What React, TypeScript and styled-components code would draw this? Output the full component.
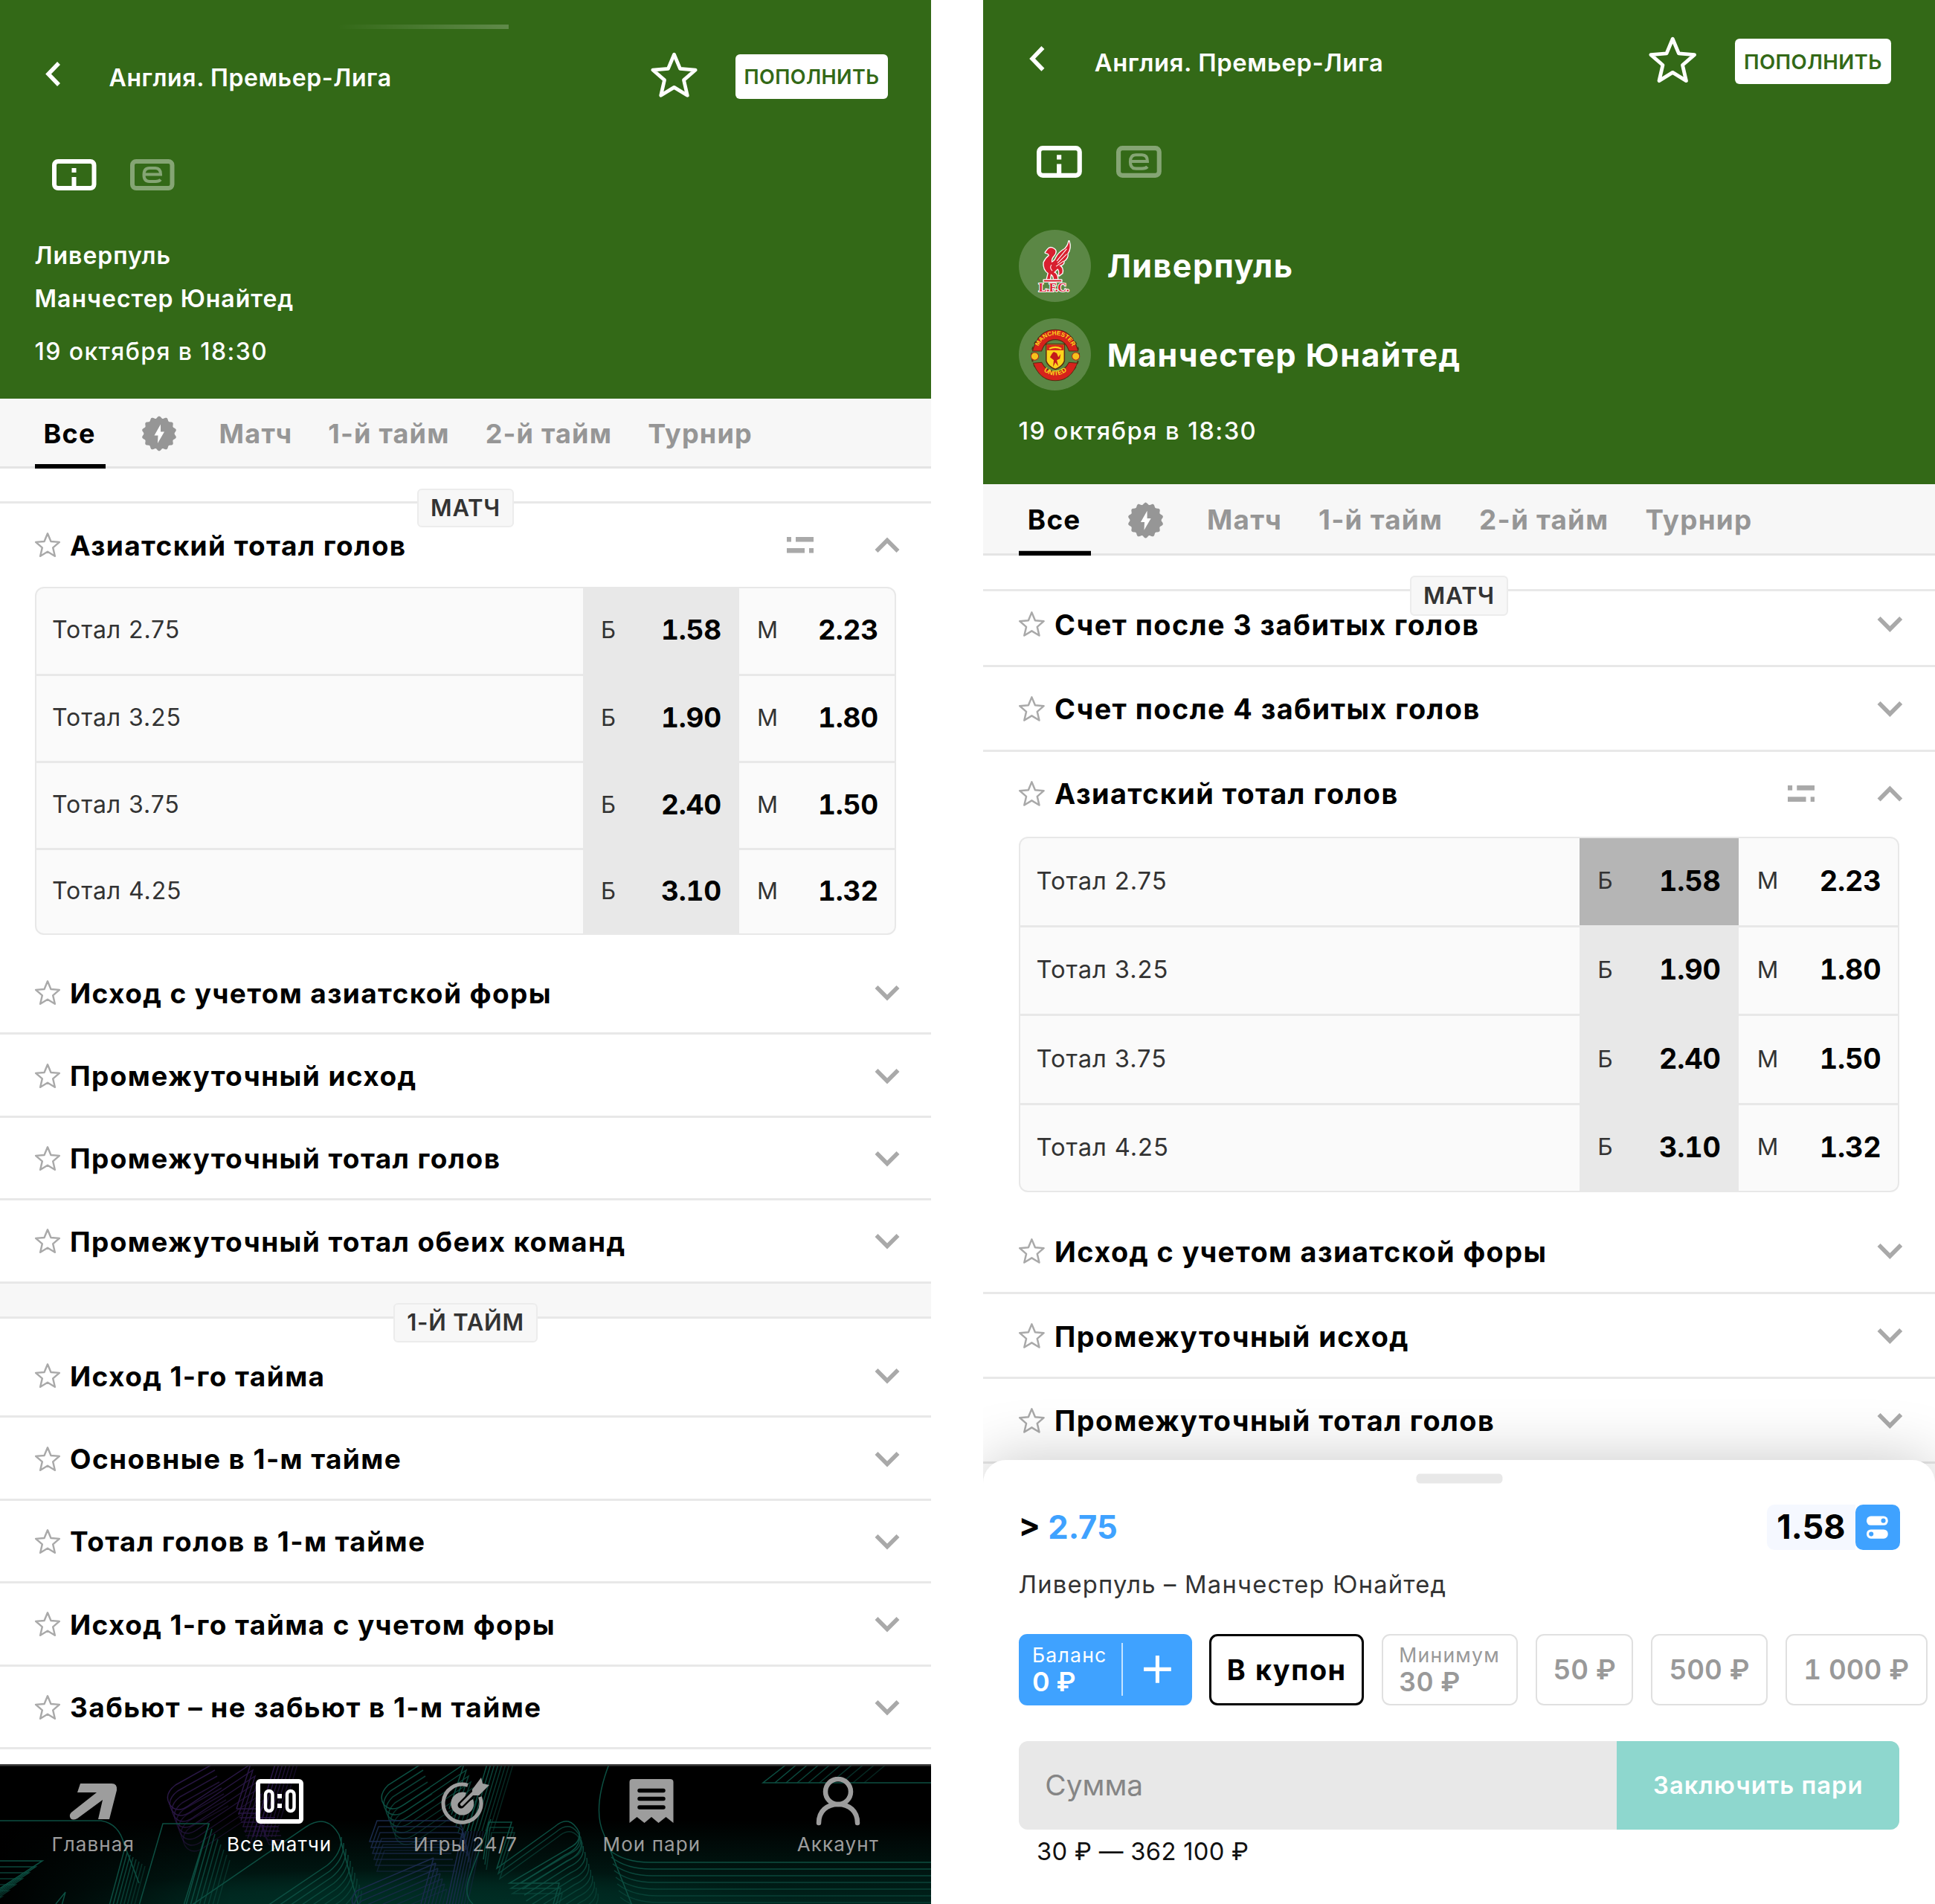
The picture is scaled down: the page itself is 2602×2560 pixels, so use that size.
import styled, { createGlobalStyle } from "styled-components";

type Market = {
  title: string;
  open?: boolean;
};

const totals = [
  { label: "Тотал 2.75", over: "1.58", under: "2.23" },
  { label: "Тотал 3.25", over: "1.90", under: "1.80" },
  { label: "Тотал 3.75", over: "2.40", under: "1.50" },
  { label: "Тотал 4.25", over: "3.10", under: "1.32" },
];

const matchMarkets: Market[] = [
  { title: "Азиатский тотал голов", open: true },
  { title: "Исход с учетом азиатской форы" },
  { title: "Промежуточный исход" },
  { title: "Промежуточный тотал голов" },
  { title: "Промежуточный тотал обеих команд" },
];

const firstHalfMarkets: Market[] = [
  { title: "Исход 1-го тайма" },
  { title: "Основные в 1-м тайме" },
  { title: "Тотал голов в 1-м тайме" },
  { title: "Исход 1-го тайма с учетом форы" },
  { title: "Забьют – не забьют в 1-м тайме" },
];

const scrolledMarkets: Market[] = [
  { title: "Счет после 3 забитых голов" },
  { title: "Счет после 4 забитых голов" },
  { title: "Азиатский тотал голов", open: true },
  { title: "Исход с учетом азиатской форы" },
  { title: "Промежуточный исход" },
  { title: "Промежуточный тотал голов" },
];

const STAR =
  "M17 2.2 L21.2 12.2 L32 13.1 L23.8 20.2 L26.3 31 L17 25.3 L7.7 31 L10.2 20.2 L2 13.1 L12.8 12.2 Z";

function StarIcon({ size, width }: { size: number; width: number }) {
  return (
    <svg width={size} height={size} viewBox="0 0 34 34" fill="none">
      <path
        d={STAR}
        stroke="currentColor"
        strokeWidth={width}
        strokeLinejoin="round"
      />
    </svg>
  );
}

function ArrowIcon({ up }: { up?: boolean }) {
  return (
    <svg width="34" height="22" viewBox="0 0 34 22" fill="none">
      <path
        d={up ? "M2.5 19 L17 4.5 L31.5 19" : "M2.5 3 L17 17.5 L31.5 3"}
        stroke="#a9a9a9"
        strokeWidth="5.6"
      />
    </svg>
  );
}

function FilterIcon() {
  return (
    <svg width="36" height="22" viewBox="0 0 36 22" fill="#a9a9a9">
      <rect x="0" y="0" width="6" height="6.5" />
      <rect x="12" y="0" width="24" height="6.5" />
      <rect x="0" y="15" width="24" height="6.5" />
      <rect x="30" y="15" width="6" height="6.5" />
    </svg>
  );
}

function BoltBadge() {
  const points = Array.from({ length: 144 }, (_, i) => {
    const a = (i / 144) * Math.PI * 2;
    const r = 22 + 1.4 * Math.cos(14 * a);
    return `${(24 + r * Math.sin(a)).toFixed(2)},${(24 - r * Math.cos(a)).toFixed(2)}`;
  }).join(" ");

  return (
    <svg width="48" height="48" viewBox="0 0 48 48">
      <polygon points={points} fill="#969696" />
      <path d="M26 11.500 L17.500 26.500 H22.500 L22 37 L31 21.500 H26 Z" fill="#fff" />
    </svg>
  );
}

function InfoIcon() {
  return (
    <svg width="60" height="42" viewBox="0 0 60 42" fill="none">
      <rect x="3" y="3" width="53.5" height="36" rx="5" stroke="#fff" strokeWidth="6" />
      <path d="M26.5 12 h6 v6 h-6 z M26.5 24 h6 v13 h-6 z" fill="#fff" />
    </svg>
  );
}

function EventIcon() {
  return (
    <svg width="60" height="42" viewBox="0 0 60 42" fill="none" opacity="0.4">
      <rect x="3" y="3" width="53.5" height="36" rx="5" stroke="#fff" strokeWidth="6" />
      <path
        d="M41 27.5 Q39 30 34 30 H26 Q18.500 30 18.500 21 Q18.500 12 26 12 H34 Q41 12 41 20.500 H18.500"
        stroke="#fff"
        strokeWidth="4"
      />
    </svg>
  );
}

function LiverpoolCrest() {
  return (
    <svg width="96" height="96" viewBox="0 0 96 96">
      <g stroke="#fff" strokeWidth="2.600" strokeLinejoin="round" paintOrder="stroke" fill="#d8202f">
        <path d="M35 30 L38 26 Q41 22 46 25 Q51 28 46 34 Q42 38 43 43 Q47 42 49 37 Q52 30 61 25 Q65 21 66 15 Q69 24 64 31 Q65 37 59 41 Q60 46 53 47 Q59 50 57 57 L53 60 Q54 53 51 51 L46 56 Q51 58 51 65 H46 Q46 60 42 58 L41 65 H37 L39 57 Q32 52 33 43 Q35 38 40 34 Q40 31 35 30 Z" />
        <path d="M33 66 H56 V68 H33 Z" />
      </g>
      <path
        d="M50 41 L63 25 M51 44 L63 32 M49 48 L59 41 M43 46 Q40 50 44 54"
        stroke="#fff"
        strokeWidth="1"
        fill="none"
      />
      <CrestLetters x="46" y="81">
        L.F.C.
      </CrestLetters>
    </svg>
  );
}

function ManchesterCrest() {
  return (
    <svg width="96" height="96" viewBox="0 0 96 96">
      <defs>
        <path id="mu-top" d="M23.500 48 A24.500 26 0 0 1 72.500 48" />
        <path id="mu-bottom" d="M24 61 Q47.500 89 72 61" />
      </defs>
      <circle cx="48" cy="48" r="31" fill="none" stroke="#4a3a14" strokeWidth="2" strokeDasharray="4 4" />
      <circle cx="21" cy="50" r="5" fill="#f6c31c" stroke="#b3261a" strokeWidth="1" />
      <circle cx="75" cy="50" r="5" fill="#f6c31c" stroke="#b3261a" strokeWidth="1" />
      <path d="M18 43 Q26 15 48 15 Q70 15 78 43 L66 43 Q61 28 48 28 Q35 28 30 43 Z" fill="#d6221c" stroke="#5b2a10" strokeWidth="1" />
      <path d="M19 59 L30 58 Q36 70 48 70 Q60 70 66 58 L77 59 Q68 82 48 82 Q28 82 19 59 Z" fill="#d6221c" stroke="#5b2a10" strokeWidth="1" />
      <path d="M36 34 H60 V56 Q58 63 48 67 Q38 63 36 56 Z" fill="#fbd41c" stroke="#5b2a10" strokeWidth="1.500" />
      <path d="M37 35 H59 V42 H37 Z" fill="#d6221c" />
      <path d="M40 40 Q48 36 56 40" stroke="#fbd41c" strokeWidth="2" fill="none" />
      <path
        d="M44 46 L46 44 L50 46 L52 51 L55 47 L54 53 L50 55 L52 63 L48 58 L45 64 L46 55 L41 51 Z"
        fill="#c41a1a"
      />
      <RingText>
        <textPath href="#mu-top" startOffset="50%" textAnchor="middle">
          MANCHESTER
        </textPath>
      </RingText>
      <RingText $size={9}>
        <textPath href="#mu-bottom" startOffset="50%" textAnchor="middle">
          UNITED
        </textPath>
      </RingText>
    </svg>
  );
}

function TopBar() {
  return (
    <TopRow>
      <BackIcon width="22" height="36" viewBox="0 0 22 36" fill="none">
        <path d="M19 3 L5 17.500 L19 32" stroke="#fff" strokeWidth="5.500" />
      </BackIcon>
      <League>Англия. Премьер-Лига</League>
      <FavoriteButton type="button">
        <StarIcon size={65} width={2.5} />
      </FavoriteButton>
      <DepositButton type="button">ПОПОЛНИТЬ</DepositButton>
    </TopRow>
  );
}

function ViewIcons() {
  return (
    <ViewRow>
      <InfoIcon />
      <EventIcon />
    </ViewRow>
  );
}

function TabBar() {
  return (
    <Tabs>
      <Tab $active>Все</Tab>
      <IconTab>
        <BoltBadge />
      </IconTab>
      <Tab>Матч</Tab>
      <Tab>1-й тайм</Tab>
      <Tab>2-й тайм</Tab>
      <Tab>Турнир</Tab>
    </Tabs>
  );
}

function TotalsTable({ selected }: { selected?: number }) {
  return (
    <Table>
      {totals.map((row, i) => (
        <TableRow key={row.label}>
          <RowLabel>{row.label}</RowLabel>
          <OddCell $tone={selected === i ? "#b5b5b5" : "#e8e8e8"}>
            <Side>Б</Side>
            <Odd>{row.over}</Odd>
          </OddCell>
          <OddCell>
            <Side>М</Side>
            <Odd>{row.under}</Odd>
          </OddCell>
        </TableRow>
      ))}
    </Table>
  );
}

function MarketList({ items, selected }: { items: Market[]; selected?: number }) {
  return (
    <>
      {items.map((item) => (
        <div key={item.title}>
          <MarketRow $open={item.open}>
            <RowStar>
              <StarIcon size={36} width={2.300} />
            </RowStar>
            <MarketTitle>{item.title}</MarketTitle>
            {item.open && <FilterIcon />}
            <ArrowBox $open={item.open}>
              <ArrowIcon up={item.open} />
            </ArrowBox>
          </MarketRow>
          {item.open && <TotalsTable selected={selected} />}
        </div>
      ))}
    </>
  );
}

// Repeats one outline with a fixed step, fading each copy out
function Echo(props: {
  d: string;
  count: number;
  dx: number;
  dy: number;
  color: string;
}) {
  return (
    <g stroke={props.color} fill="none" strokeWidth="1.500">
      {Array.from({ length: props.count }, (_, i) => (
        <path
          key={i}
          d={props.d}
          transform={`translate(${i * props.dx} ${i * props.dy})`}
          opacity={1 - (i / props.count) * 0.6}
        />
      ))}
    </g>
  );
}

function NavPattern() {
  const teal = "#0c4f42";
  const purple = "#2a1746";
  const blue = "#1b2b4d";
  return (
    <Pattern viewBox="0 0 1252 188" preserveAspectRatio="none">
      <defs>
        <radialGradient id="glow" cx="0.460" cy="1.050" r="0.420">
          <stop offset="0" stopColor="#003a2e" />
          <stop offset="0.600" stopColor="#001f19" />
          <stop offset="1" stopColor="#000" />
        </radialGradient>
        <linearGradient id="rise" x1="0" y1="0" x2="0" y2="1">
          <stop offset="0.400" stopColor="#002c23" stopOpacity="0" />
          <stop offset="1" stopColor="#002c23" stopOpacity="0.800" />
        </linearGradient>
        <linearGradient id="edge" x1="0" y1="0" x2="1" y2="0">
          <stop offset="0" stopColor="#000" />
          <stop offset="0.250" stopColor="#000" stopOpacity="0" />
        </linearGradient>
      </defs>
      <rect width="1252" height="188" fill="#000" />
      <rect y="60" width="1252" height="128" fill="url(#glow)" />
      <rect width="1252" height="188" fill="url(#rise)" />
      <rect width="1252" height="188" fill="url(#edge)" />
      <Echo color={purple} count={8} dx={3} dy={8} d="M286 0 L236 28 Q220 40 228 54 Q238 68 256 54 L337 0 L318 60" />
      <Echo color={purple} count={7} dx={5} dy={0} d="M370 0 L340 98" />
      <Echo color={purple} count={7} dx={2} dy={6} d="M318 60 H344 L350 72 H370" />
      <Echo color={teal} count={1} dx={0} dy={0} d="M0 76 H136 Q160 80 167 108 L187 160" />
      <Echo color={teal} count={8} dx={4} dy={3} d="M167 116 L147 190" />
      <Echo color={teal} count={7} dx={-9} dy={8} d="M-20 130 H57 L0 167" />
      <Echo color={teal} count={1} dx={0} dy={0} d="M75 188 L88 172 L83 190" />
      <Echo color={teal} count={1} dx={0} dy={0} d="M187 190 L219 80 H281 L247 190" />
      <Echo color={teal} count={8} dx={4} dy={7} d="M281 80 L250 190" />
      <Echo color={teal} count={1} dx={0} dy={0} d="M257 190 L412 84 Q440 66 456 95 L482 190" />
      <Echo color={teal} count={10} dx={3} dy={8} d="M360 190 L440 136 Q460 120 459 98" />
      <Echo color={teal} count={7} dx={3} dy={8} d="M566 0 L522 28 Q508 42 516 54 Q526 66 544 54 L624 0 L604 60" />
      <Echo color={teal} count={8} dx={5} dy={0} d="M655 0 L628 90" />
      <Echo color={blue} count={6} dx={2} dy={8} d="M603 104 H497 L507 76 H610 Q625 78 622 100" />
      <Echo color={blue} count={7} dx={3} dy={7} d="M583 126 L480 170 Q468 184 478 192 M583 126 L566 188" />
      <Echo color={blue} count={8} dx={4} dy={0} d="M622 90 L600 190" />
      <Echo color={teal} count={3} dx={2} dy={7} d="M650 128 L657 78 H688 L668 140 L746 84 Q766 66 779 92 Q780 104 770 110 L685 160 H752 L744 188" />
      <Echo color={teal} count={11} dx={2.500} dy={8} d="M779 94 Q782 112 760 122 L700 160" />
      <Echo color={teal} count={1} dx={0} dy={0} d="M660 74 L632 150 Q622 176 636 188" />
      <Echo color={teal} count={1} dx={0} dy={0} d="M819 0 Q796 60 812 94 L850 190" />
      <Echo color={teal} count={9} dx={2} dy={9} d="M820 116 Q840 132 874 132 H1252" />
      <Echo color={teal} count={1} dx={0} dy={0} d="M1058 0 L1026 25 H1252" />
      <Echo color={teal} count={9} dx={15} dy={0} d="M1072 0 L1042 25" />
      <rect width="1252" height="2.500" fill="#3c3c3c" />
    </Pattern>
  );
}

function BottomNav() {
  return (
    <Nav>
      <NavPattern />
      <NavItem>
        <svg width="66" height="66" viewBox="0 0 66 66">
          <path
            d="M16 9 H58 Q66 9 65 18 L55 57 H40 L46 31 L12 56 Q4 60 2 54 Q1 50 5 47 L38 21 H12 Z"
            fill="currentColor"
          />
        </svg>
        Главная
      </NavItem>
      <NavItem $active>
        <svg width="66" height="66" viewBox="0 0 66 66" fill="none" stroke="currentColor">
          <rect x="4" y="6" width="58" height="54" rx="3" strokeWidth="6" />
          <rect x="14" y="19" width="9.500" height="27" rx="4.700" strokeWidth="4.500" />
          <rect x="43" y="19" width="9.500" height="27" rx="4.700" strokeWidth="4.500" />
          <path d="M33 23 v6 M33 36 v6" strokeWidth="6" />
        </svg>
        Все матчи
      </NavItem>
      <NavItem>
        <svg width="66" height="66" viewBox="0 0 66 66" fill="none">
          <path
            d="M36 11.300 A25.500 25.500 0 1 0 52.500 27"
            stroke="currentColor"
            strokeWidth="5"
          />
          <path
            d="M34 21.500 A15.500 15.500 0 1 0 43 30 L29 37.500 Z"
            fill="currentColor"
          />
          <path d="M27 38 L51 14" stroke="#000" strokeWidth="9" strokeLinecap="round" />
          <path d="M28 37 L50 15" stroke="currentColor" strokeWidth="4.500" strokeLinecap="round" />
          <path d="M42 17 L54 1 L56 9 L65 11 L51 25 L42 25 Z" fill="currentColor" />
        </svg>
        Игры 24/7
      </NavItem>
      <NavItem>
        <svg width="66" height="66" viewBox="0 0 66 66">
          <path
            d="M3.500 7 Q3.500 3 8 3 H58 Q62.500 3 62.500 7 V62 L52.500 54 L42.500 62 L33 54 L23.500 62 L13.500 54 L3.500 62 Z"
            fill="currentColor"
          />
          <path
            d="M17 18.500 H49 M17 29.500 H49 M17 41 H49"
            stroke="#000"
            strokeWidth="5.500"
            strokeLinecap="round"
          />
        </svg>
        Мои пари
      </NavItem>
      <NavItem>
        <svg width="66" height="66" viewBox="0 0 66 66" fill="none">
          <ellipse cx="33" cy="20" rx="17" ry="17" stroke="currentColor" strokeWidth="6.500" />
          <path
            d="M7 62 C7 46 18 37 33 37 C48 37 59 46 59 62"
            stroke="currentColor"
            strokeWidth="6.500"
            strokeLinecap="round"
          />
        </svg>
        Аккаунт
      </NavItem>
    </Nav>
  );
}

function BetSheet() {
  return (
    <Sheet>
      <Handle />
      <SheetTop>
        <Pick>
          &gt; <em>2.75</em>
        </Pick>
        <PickOdd>1.58</PickOdd>
        <SettingsBox>
          <svg width="34" height="34" viewBox="0 0 34 34">
            <rect x="3" y="2.500" width="28" height="12" rx="5.500" fill="#fff" />
            <rect x="3" y="20" width="28" height="12" rx="5.500" fill="#fff" />
            <circle cx="25" cy="8.500" r="3" fill="#3fa2ff" />
            <circle cx="9" cy="26" r="3" fill="#3fa2ff" />
          </svg>
        </SettingsBox>
      </SheetTop>
      <Fixture>Ливерпуль – Манчестер Юнайтед</Fixture>
      <Chips>
        <BalanceChip>
          <ChipText>
            <ChipCaption>Баланс</ChipCaption>
            <ChipValue>0 ₽</ChipValue>
          </ChipText>
          <PlusBox>
            <svg width="38" height="38" viewBox="0 0 38 38">
              <path d="M19 1 V37 M1 19 H37" stroke="#fff" strokeWidth="5" />
            </svg>
          </PlusBox>
        </BalanceChip>
        <CouponChip $width={203}>В купон</CouponChip>
        <MinChip $width={179}>
          <ChipCaption>Минимум</ChipCaption>
          <ChipValue>30 ₽</ChipValue>
        </MinChip>
        <Chip $width={129}>50 ₽</Chip>
        <Chip $width={153}>500 ₽</Chip>
        <Chip $width={187}>1 000 ₽</Chip>
      </Chips>
      <BetForm>
        <Amount>Сумма</Amount>
        <Submit>Заключить пари</Submit>
      </BetForm>
      <Limits>30 ₽ — 362 100 ₽</Limits>
    </Sheet>
  );
}

export default function App() {
  return (
    <>
      <GlobalStyle />
      <Page>
        <Screen>
          <Header $top={73} $height={536}>
            <Grabber />
            <TopBar />
            <ViewIcons />
            <Teams>
              <Team>Ливерпуль</Team>
              <Team>Манчестер Юнайтед</Team>
            </Teams>
            <Kickoff $gap={13}>19 октября в 18:30</Kickoff>
          </Header>
          <TabBar />
          <Markets>
            <SectionHead $after={1}>
              <SectionPill>МАТЧ</SectionPill>
            </SectionHead>
            <MarketList items={matchMarkets} />
            <SectionHead $after={22.5} $grey>
              <SectionPill>1-Й ТАЙМ</SectionPill>
            </SectionHead>
            <MarketList items={firstHalfMarkets} />
          </Markets>
          <BottomNav />
        </Screen>
        <Screen $zoom={1.02236}>
          <Header $top={51} $height={637}>
            <TopBar />
            <ViewIcons />
            <BigTeams>
              <BigTeam>
                <Crest>
                  <LiverpoolCrest />
                </Crest>
                Ливерпуль
              </BigTeam>
              <BigTeam>
                <Crest>
                  <ManchesterCrest />
                </Crest>
                Манчестер Юнайтед
              </BigTeam>
            </BigTeams>
            <Kickoff $gap={24}>19 октября в 18:30</Kickoff>
          </Header>
          <TabBar />
          <Markets>
            <SectionHead $after={-12}>
              <SectionPill>МАТЧ</SectionPill>
            </SectionHead>
            <MarketList items={scrolledMarkets} selected={0} />
          </Markets>
          <BetSheet />
        </Screen>
      </Page>
    </>
  );
}

const GlobalStyle = createGlobalStyle`
  * {
    box-sizing: border-box;
  }

  body {
    margin: 0;
    background: #ffffff;
    font-family: Inter, "Open Sans", sans-serif;
  }

  button {
    font-family: inherit;
    border: none;
    padding: 0;
  }

  svg {
    display: block;
    flex: none;
  }
`;

const Page = styled.div`
  display: flex;
  justify-content: space-between;
  width: 2602px;
  height: 2560px;
  overflow: hidden;
`;

const Screen = styled.main<{ $zoom?: number }>`
  position: relative;
  display: flex;
  flex-direction: column;
  width: 1252px;
  height: ${({ $zoom }) => 2560 / ($zoom ?? 1)}px;
  zoom: ${({ $zoom }) => $zoom ?? 1};
  overflow: hidden;
  background: #ffffff;
  white-space: nowrap;
`;

const Header = styled.header<{ $top: number; $height: number }>`
  position: relative;
  flex: none;
  height: ${({ $height }) => $height}px;
  padding: ${({ $top }) => $top}px 58px 0 46.500px;
  background: #336917;
  color: #ffffff;
`;

const Grabber = styled.div`
  position: absolute;
  top: 33px;
  left: 453px;
  width: 231px;
  height: 6px;
  background: linear-gradient(90deg, transparent, rgba(255, 255, 255, 0.22));
`;

const TopRow = styled.div`
  display: flex;
  align-items: center;
  height: 60px;
  padding-left: 13px;
`;

const BackIcon = styled.svg`
  margin-bottom: 7px;
`;

const League = styled.div`
  flex: 1;
  padding: 3px 0 0 65px;
  font-size: 32px;
  font-weight: 600;
  letter-spacing: 0.6px;
`;

const FavoriteButton = styled.button`
  margin: -4px 50px 0 0;
  background: none;
  color: #ffffff;
`;

const DepositButton = styled.button`
  width: 205px;
  height: 60px;
  border-radius: 6px;
  background: #ffffff;
  color: #336917;
  font-size: 27px;
  font-weight: 600;
  line-height: 61px;
  letter-spacing: 0.4px;
`;

const ViewRow = styled.div`
  display: flex;
  gap: 45px;
  margin-top: 80.500px;
  padding-left: 23.500px;
`;

const Teams = styled.div`
  margin-top: 59.500px;
`;

const Team = styled.div`
  font-size: 32px;
  font-weight: 600;
  line-height: 58px;
  letter-spacing: 1px;
`;

const BigTeams = styled.div`
  display: flex;
  flex-direction: column;
  gap: 22px;
  margin-top: 68.500px;
`;

const BigTeam = styled.div`
  display: flex;
  align-items: center;
  gap: 21.500px;
  font-size: 42px;
  font-weight: 700;
  letter-spacing: 1.5px;
`;

const Crest = styled.div`
  width: 95px;
  height: 95px;
  border-radius: 50%;
  background: rgba(255, 255, 255, 0.2);
`;

const CrestLetters = styled.text`
  font-family: "Liberation Serif", serif;
  font-size: 16px;
  font-weight: 700;
  letter-spacing: -0.5px;
  text-anchor: middle;
  fill: #d8202f;
  stroke: #ffffff;
  stroke-width: 2px;
  paint-order: stroke;
`;

const RingText = styled.text<{ $size?: number }>`
  font-family: "Liberation Sans", sans-serif;
  font-size: ${({ $size }) => $size ?? 8}px;
  font-weight: 700;
  letter-spacing: 0;
  fill: #fbd41c;
`;

const Kickoff = styled.div<{ $gap: number }>`
  margin-top: ${({ $gap }) => $gap}px;
  font-size: 32px;
  font-weight: 500;
  line-height: 58px;
  letter-spacing: 1.4px;
`;

const Tabs = styled.nav`
  display: flex;
  flex: none;
  gap: 23px;
  height: 94px;
  padding-left: 46.500px;
  background: #f7f7f7;
  box-shadow: inset 0 -3px 0 #e4e4e4;
`;

const Tab = styled.div<{ $active?: boolean }>`
  padding: 0 13px 0 12px;
  color: ${({ $active }) => ($active ? "#000000" : "#969696")};
  font-size: 36px;
  font-weight: 700;
  line-height: 94px;
  letter-spacing: 1.2px;
  box-shadow: ${({ $active }) => ($active ? "inset 0 -6px 0 #000000" : "none")};
`;

const IconTab = styled.div`
  display: flex;
  align-items: center;
  padding: 0 22px 0 25px;
`;

const Markets = styled.section`
  flex: 1;
  min-height: 0;
  overflow: hidden;
`;

const SectionHead = styled.div<{ $after: number; $grey?: boolean }>`
  position: relative;
  z-index: 1;
  display: flex;
  justify-content: center;
  height: 47px;
  margin-bottom: ${({ $after }) => $after}px;
  padding-top: 26.500px;
  border-bottom: 3px solid #e8e8e8;
  background: ${({ $grey }) => ($grey ? "#f7f7f7" : "none")};
`;

const SectionPill = styled.div`
  height: 52.500px;
  padding: 0 16px;
  border: 2px solid #ececec;
  border-radius: 6px;
  background: #f7f7f7;
  color: #333333;
  font-size: 31px;
  font-weight: 600;
  line-height: 48px;
  letter-spacing: 0.8px;
`;

const MarketRow = styled.div<{ $open?: boolean }>`
  display: flex;
  align-items: center;
  height: 111.400px;
  padding: 2px 42px 0 46px;
  border-bottom: 3px solid ${({ $open }) => ($open ? "transparent" : "#e8e8e8")};
`;

const RowStar = styled.div`
  color: #a9a9a9;
`;

const MarketTitle = styled.div`
  flex: 1;
  padding-left: 12px;
  color: #000000;
  font-size: 37px;
  font-weight: 700;
  letter-spacing: 1.4px;
`;

const ArrowBox = styled.div<{ $open?: boolean }>`
  padding-left: ${({ $open }) => ($open ? 82 : 0)}px;
`;

const Table = styled.div`
  margin: 0 47px 23px;
  border: 2px solid #e8e8e8;
  border-radius: 12px;
  background: #fafafa;
  overflow: hidden;
`;

const TableRow = styled.div`
  display: flex;
  height: 117.200px;
  border-bottom: 3px solid #e8e8e8;

  &:last-child {
    height: 112px;
    border-bottom: none;
  }
`;

const RowLabel = styled.div`
  display: flex;
  flex: 1;
  align-items: center;
  padding: 0 0 3px 21px;
  color: #333333;
  font-size: 32px;
  font-weight: 400;
  letter-spacing: 0.9px;
`;

const OddCell = styled.div<{ $tone?: string }>`
  display: flex;
  align-items: center;
  justify-content: space-between;
  width: ${({ $tone }) => ($tone ? 210 : 209)}px;
  padding: 0 ${({ $tone }) => ($tone ? 24 : 22)}px 3px 24px;
  background: ${({ $tone }) => $tone ?? "none"};
`;

const Side = styled.span`
  color: #333333;
  font-size: 31px;
`;

const Odd = styled.span`
  color: #000000;
  font-size: 37px;
  font-weight: 700;
  font-variant-numeric: tabular-nums;
  letter-spacing: -0.2px;
`;

const Nav = styled.nav`
  position: relative;
  display: flex;
  flex: none;
  height: 188px;
  background: #000000;
`;

const Pattern = styled.svg`
  position: absolute;
  inset: 0;
  width: 100%;
  height: 100%;
`;

const NavItem = styled.div<{ $active?: boolean }>`
  position: relative;
  display: flex;
  flex: 1;
  flex-direction: column;
  align-items: center;
  gap: 8px;
  padding-top: 17px;
  color: ${({ $active }) => ($active ? "#ffffff" : "#9d9d9d")};
  font-size: 26px;
  line-height: 34px;
  letter-spacing: 1.1px;
`;

const Sheet = styled.section`
  position: absolute;
  right: 0;
  bottom: 0;
  left: 0;
  z-index: 2;
  height: 583.500px;
  padding-left: 46.500px;
  border-radius: 30px 30px 0 0;
  background: #ffffff;
  box-shadow: 0 0 80px rgba(0, 0, 0, 0.22);
`;

const Handle = styled.div`
  width: 113px;
  height: 12px;
  margin: 0 auto;
  border-radius: 5px;
  background: #e8e8e8;
  transform: translate(-23px, 18px);
`;

const SheetTop = styled.div`
  display: flex;
  align-items: center;
  height: 59px;
  margin: 46.500px 46px 0 0;
`;

const Pick = styled.div`
  flex: 1;
  font-size: 42.500px;
  font-weight: 700;

  em {
    color: #3fa2ff;
    font-style: normal;
  }
`;

const PickOdd = styled.div`
  width: 116px;
  height: 59px;
  border-radius: 10px 0 0 10px;
  background: #f5f8ff;
  font-size: 44px;
  font-weight: 700;
  line-height: 59px;
  text-align: center;
`;

const SettingsBox = styled.div`
  display: flex;
  align-items: center;
  justify-content: center;
  width: 59px;
  height: 59px;
  border-radius: 10px;
  background: #3fa2ff;
`;

const Fixture = styled.div`
  margin-top: 21px;
  color: #333333;
  font-size: 32px;
  line-height: 50px;
  letter-spacing: 1.2px;
`;

const Chips = styled.div`
  display: flex;
  gap: 23.300px;
  margin-top: 39.500px;
`;

const Chip = styled.div<{ $width: number }>`
  display: flex;
  flex: none;
  align-items: center;
  justify-content: center;
  width: ${({ $width }) => $width}px;
  height: 94px;
  border: 2px solid #e0e0e0;
  border-radius: 11px;
  color: #999999;
  font-size: 36px;
  font-weight: 600;
  font-variant-numeric: tabular-nums;
`;

const CouponChip = styled(Chip)`
  border: 3px solid #000000;
  color: #000000;
  font-size: 37px;
  font-weight: 700;
  letter-spacing: 1.5px;
`;

const MinChip = styled(Chip)`
  flex-direction: column;
  align-items: flex-start;
  padding-left: 21px;
`;

const BalanceChip = styled.div`
  display: flex;
  flex: none;
  align-items: center;
  width: 228px;
  height: 94px;
  border-radius: 11px;
  background: #3fa2ff;
  color: #ffffff;
`;

const ChipText = styled.div`
  flex: 1;
  padding-left: 18px;
`;

const ChipCaption = styled.div`
  font-size: 26px;
  font-weight: 400;
  line-height: 33px;
  letter-spacing: 1.2px;
`;

const ChipValue = styled.div`
  font-size: 35px;
  font-weight: 600;
  line-height: 36px;
`;

const PlusBox = styled.div`
  display: flex;
  align-items: center;
  justify-content: center;
  width: 93px;
  height: 70px;
  border-left: 2px solid rgba(255, 255, 255, 0.7);
`;

const BetForm = styled.div`
  display: flex;
  width: 1159px;
  height: 117px;
  margin-top: 47px;
  border-radius: 12px;
  background: #e8e8e8;
  overflow: hidden;
`;

const Amount = styled.div`
  flex: 1;
  padding-left: 35px;
  color: #858585;
  font-size: 38px;
  line-height: 116px;
`;

const Submit = styled.div`
  width: 372px;
  background: #8ed7ce;
  color: #ffffff;
  font-size: 32px;
  font-weight: 600;
  line-height: 116px;
  letter-spacing: 1px;
  text-align: center;
`;

const Limits = styled.div`
  padding: 9px 0 0 24px;
  color: #111111;
  font-size: 32px;
  line-height: 40px;
  letter-spacing: 0.3px;
`;
